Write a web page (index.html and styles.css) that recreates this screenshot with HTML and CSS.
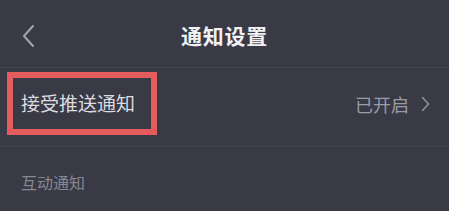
FILE: index.html
```html
<!DOCTYPE html>
<html lang="zh-CN">
<head>
    <meta charset="UTF-8">
    <meta name="viewport" content="width=device-width, initial-scale=1.0">
    <title>通知设置</title>
    <link rel="stylesheet" href="styles.css">
</head>
<body>
    <header class="nav-bar">
        <button class="back-btn" aria-label="返回">
            <svg viewBox="0 0 14 24" width="14" height="24">
                <path d="M12,2 L3,12 L12,22" stroke="#a3a4ad" stroke-width="2" fill="none" stroke-linecap="round" stroke-linejoin="round"/>
            </svg>
        </button>
        <h1 class="nav-title">通知设置</h1>
    </header>

    <ul class="setting-list">
        <li class="setting-item">
            <span class="setting-name highlight">接受推送通知</span>
            <span class="setting-value">
                已开启
                <svg viewBox="0 0 9 16" width="9" height="16">
                    <path d="M1.5,1.5 L7.5,8 L1.5,14.5" stroke="#8d8e97" stroke-width="1.6" fill="none" stroke-linecap="round" stroke-linejoin="round"/>
                </svg>
            </span>
        </li>
    </ul>

    <div class="section-title">互动通知</div>
</body>
</html>
```

FILE: styles.css
```css
/* Reset */
* {
    margin: 0;
    padding: 0;
    box-sizing: border-box;
}

body {
    font-family: "Noto Sans CJK SC", "Noto Sans", sans-serif;
    background-color: #393a46;
    color: #fff;
    width: 449px;
    height: 211px;
    overflow: hidden;
}

/* Nav bar */
.nav-bar {
    position: relative;
    height: 68px;
    display: flex;
    align-items: center;
    justify-content: center;
    border-bottom: 1px solid #42434f;
}

.back-btn {
    position: absolute;
    left: 21px;
    top: 24px;
    background: none;
    border: none;
    display: flex;
}

.nav-title {
    font-size: 21px;
    font-weight: bold;
    color: #f2f2f4;
    letter-spacing: 0.8px;
    margin-top: 2px;
}

/* Settings list */
.setting-list {
    list-style: none;
}

.setting-item {
    height: 79px;
    display: flex;
    justify-content: space-between;
    align-items: center;
    padding: 0 19px 0 7px;
    border-bottom: 1px solid #42434f;
}

.setting-name {
    font-size: 19px;
    color: #dcdce0;
    line-height: 1;
}

.highlight {
    border: 6px solid #e65c5e;
    padding: 15px 16px 17px 8px;
    margin-top: -8px;
}

.setting-value {
    display: flex;
    align-items: center;
    gap: 12px;
    font-size: 18px;
    color: #9c9ca5;
    margin-top: -6px;
}

/* Section */
.section-title {
    font-size: 16px;
    color: #868791;
    padding: 23px 21px 0;
}
```
